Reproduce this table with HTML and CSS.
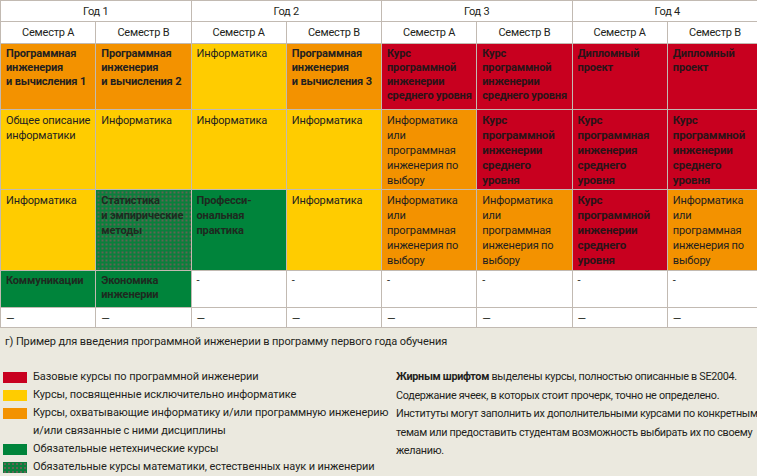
FILE: index.html
```html
<!DOCTYPE html>
<html lang="ru">
<head>
<meta charset="utf-8">
<link rel="stylesheet" href="styles.css">
</head>
<body>
<table class="plan">
  <colgroup>
    <col class="c"><col class="c"><col class="c"><col class="c"><col class="c"><col class="c"><col class="c"><col class="c">
  </colgroup>
  <tr class="h-year">
    <th colspan="2">Год 1</th><th colspan="2">Год 2</th><th colspan="2">Год 3</th><th colspan="2">Год 4</th>
  </tr>
  <tr class="h-sem">
    <th>Семестр А</th><th>Семестр В</th><th>Семестр А</th><th>Семестр В</th><th>Семестр А</th><th>Семестр В</th><th>Семестр А</th><th>Семестр В</th>
  </tr>
  <tr class="r1">
    <td class="or b">Программная инженерия и&nbsp;вычисления&nbsp;1</td>
    <td class="or b">Программная инженерия и&nbsp;вычисления&nbsp;2</td>
    <td class="ye">Информатика</td>
    <td class="or b">Программная инженерия и&nbsp;вычисления&nbsp;3</td>
    <td class="rd b">Курс программной инженерии среднего уровня</td>
    <td class="rd b">Курс программной инженерии среднего уровня</td>
    <td class="rd b">Дипломный проект</td>
    <td class="rd b">Дипломный проект</td>
  </tr>
  <tr class="r2">
    <td class="ye">Общее описание информатики</td>
    <td class="ye">Информатика</td>
    <td class="ye">Информатика</td>
    <td class="ye">Информатика</td>
    <td class="or">Информатика или программная инженерия по выбору</td>
    <td class="rd b lg">Курс<br>программной<br>инженерии<br>среднего<br>уровня</td>
    <td class="rd b lg">Курс<br>программная<br>инженерия<br>среднего<br>уровня</td>
    <td class="rd b lg">Курс<br>программной<br>инженерии<br>среднего<br>уровня</td>
  </tr>
  <tr class="r3">
    <td class="ye">Информатика</td>
    <td class="gd b">Статистика и&nbsp;эмпирические методы</td>
    <td class="gr b">Професси-<br>ональная практика</td>
    <td class="ye">Информатика</td>
    <td class="or">Информатика или программная инженерия по выбору</td>
    <td class="or">Информатика или программная инженерия по выбору</td>
    <td class="rd b lg">Курс<br>программной<br>инженерии<br>среднего<br>уровня</td>
    <td class="or">Информатика или программная инженерия по выбору</td>
  </tr>
  <tr class="r4">
    <td class="gr b">Коммуникации</td>
    <td class="gr b">Экономика инженерии</td>
    <td class="wh">-</td><td class="wh">-</td><td class="wh">-</td><td class="wh">-</td><td class="wh">-</td><td class="wh">-</td>
  </tr>
  <tr class="r5">
    <td class="wh">—</td><td class="wh">—</td><td class="wh">—</td><td class="wh">—</td><td class="wh">—</td><td class="wh">—</td><td class="wh">—</td><td class="wh">—</td>
  </tr>
</table>
<section class="notes">
  <p class="caption">г) Пример для введения программной инженерии в программу первого года обучения</p>
  <div class="legend">
    <ul class="keys">
      <li><span class="sw rd"></span><span>Базовые курсы по программной инженерии</span></li>
      <li><span class="sw ye"></span><span>Курсы, посвященные исключительно информатике</span></li>
      <li><span class="sw or"></span><span>Курсы, охватывающие информатику и/или программную инженерию<br>и/или связанные с ними дисциплины</span></li>
      <li><span class="sw gr"></span><span>Обязательные нетехнические курсы</span></li>
      <li><span class="sw gd"></span><span>Обязательные курсы математики, естественных наук и инженерии</span></li>
    </ul>
    <p class="remark"><strong>Жирным шрифтом</strong> выделены курсы, полностью описанные в SE2004.<br>Содержание ячеек, в которых стоит прочерк, точно не определено.<br>Институты могут заполнить их дополнительными курсами по конкретным<br>темам или предоставить студентам возможность выбирать их по своему<br>желанию.</p>
  </div>
</section>
</body>
</html>
```

FILE: styles.css
```css
html, body {
  margin: 0;
  padding: 0;
}
body {
  width: 757px;
  height: 476px;
  overflow: hidden;
  background: #ebe9df;
  font-family: Roboto, "Noto Sans", "Liberation Sans", sans-serif;
  font-size: 11px;
  color: #231f20;
}
.plan {
  table-layout: fixed;
  width: 762px;
  border-collapse: collapse;
  background: #fff;
}
.plan .c { width: 95.25px; }
.plan th, .plan td {
  border: 1px solid #c2bab2;
  padding: 0;
  overflow: hidden;
}
.plan th {
  font-weight: 400;
  text-align: center;
  vertical-align: middle;
  font-size: 11px;
  letter-spacing: -0.2px;
}
.h-year th { height: 20px; }
.h-sem th { height: 21px; }
.plan td {
  vertical-align: top;
  padding: 3px 4px 0 5px;
  line-height: 15px;
  letter-spacing: -0.15px;
}
.r1 td { height: 62px; line-height: 14px; }
.r2 td { height: 76px; }
.r3 td { height: 77px; }
.r4 td { height: 33px; line-height: 14px; }
.r5 td { height: 17px; vertical-align: middle; padding-top: 2px; }
.b { font-weight: 700; letter-spacing: -0.3px; }
.plan td.lg { font-size: 11.5px; line-height: 15px; white-space: nowrap; }
.or { background: #f39200; }
.ye { background: #ffcc00; }
.rd { background: #c8001f; color: #2a1418; }
.gr { background: #00843b; color: #1e2a20; }
.gd {
  background-color: #0b7f3c;
  background-image: radial-gradient(circle, #8f5560 0.6px, transparent 0.9px);
  background-size: 4px 4px;
  color: #1e2a20;
}
.wh { background: #fff; }
.notes {
  padding: 6px 0 0 0;
}
.caption {
  margin: 0 0 0 5px;
  line-height: 16px;
  font-size: 11px;
  letter-spacing: -0.1px;
}
.legend {
  display: flex;
  margin-top: 18px;
}
.keys {
  list-style: none;
  margin: 0;
  padding: 0 0 0 3px;
  width: 393px;
  flex: none;
}
.keys li {
  display: flex;
  align-items: flex-start;
  gap: 6px;
  line-height: 18px;
  font-size: 11px;
  letter-spacing: -0.1px;
}
.sw {
  flex: none;
  width: 24px;
  height: 11px;
  margin-top: 4px;
}
.remark {
  margin: 0;
  line-height: 18.5px;
  font-size: 10.8px;
  letter-spacing: -0.3px;
  white-space: nowrap;
  flex: none;
}
.remark strong { font-weight: 700; }
```
